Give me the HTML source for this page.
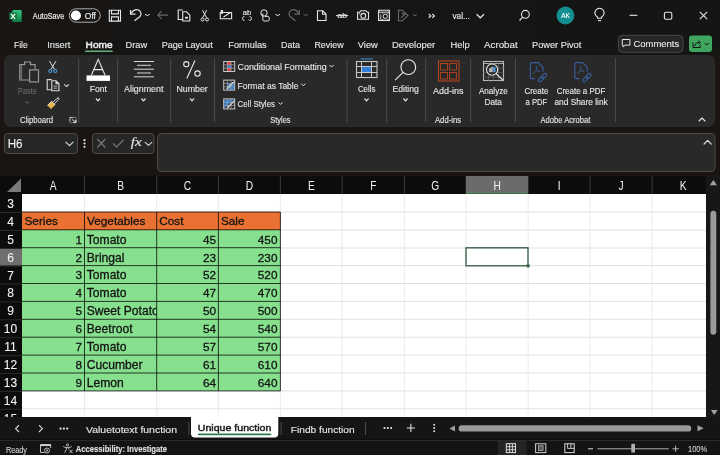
<!DOCTYPE html>
<html><head><meta charset="utf-8"><style>
html,body{margin:0;padding:0;width:720px;height:455px;overflow:hidden;background:#171614;}
svg{display:block;will-change:transform;font-family:"Liberation Sans", sans-serif;}
</style></head><body>
<svg width="720" height="455" viewBox="0 0 720 455">
<defs><linearGradient id="tg" x1="0" x2="1" y1="0" y2="0"><stop offset="0" stop-color="#181513"/><stop offset="0.5" stop-color="#161614"/><stop offset="1" stop-color="#141613"/></linearGradient></defs>
<rect x="0" y="0" width="720" height="55" fill="url(#tg)"/>
<rect x="0" y="55" width="720" height="122" fill="#1a1512"/>
<rect x="4" y="55" width="711" height="72" fill="#292929" rx="7"/>
<defs><linearGradient id="xg" x1="0" x2="0" y1="0" y2="1"><stop offset="0" stop-color="#33c481"/><stop offset="0.5" stop-color="#21a366"/><stop offset="1" stop-color="#107c41"/></linearGradient></defs>
<rect x="12.3" y="10" width="9.4" height="12" fill="url(#xg)" rx="1.2"/>
<rect x="9.3" y="12.6" width="7.6" height="7" fill="#107c41" rx="0.8"/>
<path d="M11,13.9 l4.2,4.9 M15.2,13.9 l-4.2,4.9" stroke="#ffffff" fill="none" stroke-width="1.1"/>
<text x="32.8" y="18.9" font-size="8.3" fill="#e8e8e8" textLength="31.40" lengthAdjust="spacingAndGlyphs" stroke="#e8e8e8" stroke-width="0.2">AutoSave</text>
<rect x="69.25" y="8.8" width="31" height="13.4" fill="none" rx="6.7" stroke="#bdbdbd" stroke-width="0.9"/>
<circle cx="75.9" cy="15.5" r="5.1" fill="#ffffff"/>
<text x="84.8" y="19" font-size="8.3" fill="#e8e8e8" textLength="11.20" lengthAdjust="spacingAndGlyphs" stroke="#e8e8e8" stroke-width="0.2">Off</text>
<path d="M109.3,10.3 h11.2 v10.8 h-11.2 z M111.5,10.3 v3.6 h6.9 v-3.6 M111.5,21.1 v-4.2 h6.9 v4.2" stroke="#e8e8e8" fill="none" stroke-width="1.1"/>
<path d="M130.55,10 V14.1 H135.5" stroke="#e8e8e8" fill="none" stroke-width="1.2"/>
<path d="M131.2,13.4 C133,10.5 136,9 138.5,10 C141.5,11.5 141.5,15 140,16.5 L134.5,20.8" stroke="#e8e8e8" fill="none" stroke-width="1.2"/>
<path d="M145,14.3 L147.4,15.6 L149.7,14.3" stroke="#e8e8e8" fill="none" stroke-width="1"/>
<path d="M158,15.1 h10 M161.7,11.1 l-3.9,4 l3.9,3.8" stroke="#6a6a6a" fill="none" stroke-width="1.1"/>
<path d="M182.7,19.5 h-4.5 v-9.5 h4.5" stroke="#e8e8e8" fill="none" stroke-width="1.1"/>
<path d="M182.7,11.8 h3.8 l3.3,3.3 v5.9 h-7.1 z" stroke="#e8e8e8" fill="none" stroke-width="1.1"/>
<rect x="185" y="16.8" width="3" height="1.8" fill="#e8e8e8"/>
<path d="M202.5,10.2 L206.6,17.8 M206.7,10.2 L202.6,17.8" stroke="#e8e8e8" fill="none" stroke-width="1"/>
<circle cx="202.5" cy="19.5" r="1.5" fill="none" stroke="#e8e8e8" stroke-width="1"/>
<circle cx="207" cy="19.5" r="1.5" fill="none" stroke="#e8e8e8" stroke-width="1"/>
<path d="M220.3,12.5 h11.3 v6.2 h-11.3 z M223.5,17 L230.8,12.3" stroke="#e8e8e8" fill="none" stroke-width="1.1"/>
<rect x="220.8" y="10" width="2.2" height="3.8" fill="#e8e8e8"/>
<text x="247" y="15.3" font-size="6.8" fill="#e8e8e8" textLength="8.50" lengthAdjust="spacingAndGlyphs" text-anchor="middle" stroke="#e8e8e8" stroke-width="0.12">ab</text>
<path d="M244.5,16.5 a2,2 0 0 0 0,4 M249.5,16.5 a2,2 0 0 1 0,4 l-1,-1" stroke="#e8e8e8" fill="none" stroke-width="0.9"/>
<circle cx="264" cy="13" r="3.2" fill="none" stroke="#e8e8e8" stroke-width="1"/>
<path d="M262.8,13.5 v6 a1.5,1.5 0 0 0 1.5,1.5 h3.2 a1.8,1.8 0 0 0 1.8,-1.8 v-1 a1.8,1.8 0 0 0 -1.8,-1.8 h-2.5" stroke="#e8e8e8" fill="none" stroke-width="1"/>
<path d="M275.5,14.3 L277.7,15.6 L279.9,14.3" stroke="#e8e8e8" fill="none" stroke-width="1"/>
<path d="M299.3,10 V14.1 H294.4" stroke="#6a6a6a" fill="none" stroke-width="1.2"/>
<path d="M298.7,13.4 C297,10.5 294,9 291.5,10 C288.5,11.5 288.5,15 290,16.5 L295.5,20.8" stroke="#6a6a6a" fill="none" stroke-width="1.2"/>
<path d="M303.6,14.3 L305.7,15.6 L307.8,14.3" stroke="#6a6a6a" fill="none" stroke-width="1"/>
<path d="M317.5,10.8 h5.2 l3.3,3.3 v6.4 h-8.5 z M322.5,10.8 v3.5 h3.5" stroke="#e8e8e8" fill="none" stroke-width="1.1"/>
<text x="342.2" y="18.2" font-size="6.8" fill="#e8e8e8" textLength="9.50" lengthAdjust="spacingAndGlyphs" text-anchor="middle" stroke="#e8e8e8" stroke-width="0.12">ab</text>
<line x1="336" y1="15.6" x2="348.2" y2="15.6" stroke="#e8e8e8" stroke-width="1"/>
<path d="M357.6,12.3 h2 l1.3,-1.6 h5 l1.3,1.6 h1.3 v7 h-10.9 z" stroke="#e8e8e8" fill="none" stroke-width="1.1"/>
<circle cx="363.3" cy="15.8" r="2.4" fill="none" stroke="#e8e8e8" stroke-width="1.1"/>
<circle cx="359.6" cy="13.8" r="0.6" fill="#e8e8e8"/>
<path d="M378.6,10.2 h10.8 v10.2 h-10.8 z" stroke="#e8e8e8" fill="none" stroke-width="1.1"/>
<line x1="378.6" y1="12.2" x2="389.4" y2="12.2" stroke="#e8e8e8" stroke-width="1"/>
<line x1="380.8" y1="14.5" x2="380.8" y2="19.5" stroke="#e8e8e8" stroke-width="0.8"/>
<circle cx="385.3" cy="16.3" r="2.2" fill="#171614" stroke="#e8e8e8" stroke-width="1"/>
<path d="M383,19 l-1.5,2 M387.6,19 l1.5,2 M383,13.8 l-1,-1 M387.6,13.8 l1,-1" stroke="#e8e8e8" fill="none" stroke-width="0.9"/>
<path d="M398.5,10.2 h4 l5.3,5.3 l-5.3,5.3 h-4 z M401,18 l4.5,-4.5 M402,12.5 l2,2" stroke="#6a6a6a" fill="none" stroke-width="1.1"/>
<path d="M413,14.5 L414.9,15.8 L416.8,14.5" stroke="#6a6a6a" fill="none" stroke-width="1"/>
<path d="M428.8,14 l2,1.9 l-2,1.9 M432.3,14 l2,1.9 l-2,1.9" stroke="#e8e8e8" fill="none" stroke-width="1.2"/>
<text x="452.4" y="19" font-size="8.2" fill="#e8e8e8" textLength="17.50" lengthAdjust="spacingAndGlyphs" stroke="#e8e8e8" stroke-width="0.12">val...</text>
<path d="M476.6,14.2 L480.3,17.8 L484,14.2" stroke="#e8e8e8" fill="none" stroke-width="1.2"/>
<circle cx="525.4" cy="14.3" r="3.9" fill="none" stroke="#e8e8e8" stroke-width="1.1"/>
<path d="M522.6,17.1 L519.5,20.6" stroke="#e8e8e8" fill="none" stroke-width="1.2"/>
<circle cx="565.45" cy="15.5" r="8.9" fill="#138e91"/>
<text x="561.2" y="18.3" font-size="7.4" fill="#ffffff" textLength="8.80" lengthAdjust="spacingAndGlyphs" stroke="#ffffff" stroke-width="0.12">AK</text>
<path d="M597.5,18.3 v-1.3 a4.6,4.6 0 1 1 4,0 v1.3 z" stroke="#e8e8e8" fill="none" stroke-width="1.1"/>
<line x1="598" y1="20.6" x2="601" y2="20.6" stroke="#e8e8e8" stroke-width="1.1"/>
<line x1="629.6" y1="15.3" x2="637.4" y2="15.3" stroke="#e8e8e8" stroke-width="1.1"/>
<rect x="664.4" y="12.2" width="7.4" height="7" fill="none" rx="1.5" stroke="#e8e8e8" stroke-width="1.1"/>
<path d="M699.8,11.9 l7.4,7.2 M707.2,11.9 l-7.4,7.2" stroke="#e8e8e8" fill="none" stroke-width="1.1"/>
<text x="13.9" y="47.7" font-size="9.5" fill="#e8e8e8" textLength="13.90" lengthAdjust="spacingAndGlyphs" stroke="#e8e8e8" stroke-width="0.12">File</text>
<text x="47.2" y="47.7" font-size="9.5" fill="#e8e8e8" textLength="23.10" lengthAdjust="spacingAndGlyphs" stroke="#e8e8e8" stroke-width="0.12">Insert</text>
<text x="85.6" y="47.7" font-size="9.5" fill="#e8e8e8" textLength="26.90" lengthAdjust="spacingAndGlyphs" stroke="#e8e8e8" stroke-width="0.55">Home</text>
<text x="125.6" y="47.7" font-size="9.5" fill="#e8e8e8" textLength="21.60" lengthAdjust="spacingAndGlyphs" stroke="#e8e8e8" stroke-width="0.12">Draw</text>
<text x="161.7" y="47.7" font-size="9.5" fill="#e8e8e8" textLength="51.00" lengthAdjust="spacingAndGlyphs" stroke="#e8e8e8" stroke-width="0.12">Page Layout</text>
<text x="228.3" y="47.7" font-size="9.5" fill="#e8e8e8" textLength="38.40" lengthAdjust="spacingAndGlyphs" stroke="#e8e8e8" stroke-width="0.12">Formulas</text>
<text x="281" y="47.7" font-size="9.5" fill="#e8e8e8" textLength="19.00" lengthAdjust="spacingAndGlyphs" stroke="#e8e8e8" stroke-width="0.12">Data</text>
<text x="314.4" y="47.7" font-size="9.5" fill="#e8e8e8" textLength="29.20" lengthAdjust="spacingAndGlyphs" stroke="#e8e8e8" stroke-width="0.12">Review</text>
<text x="357.8" y="47.7" font-size="9.5" fill="#e8e8e8" textLength="20.00" lengthAdjust="spacingAndGlyphs" stroke="#e8e8e8" stroke-width="0.12">View</text>
<text x="392" y="47.7" font-size="9.5" fill="#e8e8e8" textLength="43.20" lengthAdjust="spacingAndGlyphs" stroke="#e8e8e8" stroke-width="0.12">Developer</text>
<text x="450.5" y="47.7" font-size="9.5" fill="#e8e8e8" textLength="19.20" lengthAdjust="spacingAndGlyphs" stroke="#e8e8e8" stroke-width="0.12">Help</text>
<text x="484" y="47.7" font-size="9.5" fill="#e8e8e8" textLength="33.70" lengthAdjust="spacingAndGlyphs" stroke="#e8e8e8" stroke-width="0.12">Acrobat</text>
<text x="532" y="47.7" font-size="9.5" fill="#e8e8e8" textLength="49.30" lengthAdjust="spacingAndGlyphs" stroke="#e8e8e8" stroke-width="0.12">Power Pivot</text>
<rect x="85" y="50.6" width="27.8" height="1.5" fill="#62b47f" rx="0.7"/>
<rect x="618.5" y="35.3" width="64.5" height="17" fill="#262626" rx="4" stroke="#474747" stroke-width="1"/>
<path d="M622.3,39.5 h7.6 v5.6 h-4.8 l-2,1.9 v-1.9 h-0.8 z" stroke="#e8e8e8" fill="none" stroke-width="1"/>
<text x="633.5" y="47.4" font-size="9.5" fill="#e8e8e8" textLength="45.70" lengthAdjust="spacingAndGlyphs" stroke="#e8e8e8" stroke-width="0.12">Comments</text>
<rect x="689" y="35.5" width="23" height="16.5" fill="#40a55f" rx="3"/>
<path d="M693,42.5 v5 h7.2 v-2.5 M694.8,46 c0.3,-2.5 2,-3.6 4.5,-3.6 M698.3,40.6 l2.2,1.9 l-2.2,1.9" stroke="#111" fill="none" stroke-width="1"/>
<path d="M704.9,43.2 L706.85,44.9 L708.8,43.2" stroke="#111" fill="none" stroke-width="1"/>
<line x1="78.7" y1="58.5" x2="78.7" y2="122.5" stroke="#4a4a4a" stroke-width="1"/>
<line x1="117.6" y1="58.5" x2="117.6" y2="122.5" stroke="#4a4a4a" stroke-width="1"/>
<line x1="170.7" y1="58.5" x2="170.7" y2="122.5" stroke="#4a4a4a" stroke-width="1"/>
<line x1="214.5" y1="58.5" x2="214.5" y2="122.5" stroke="#4a4a4a" stroke-width="1"/>
<line x1="347" y1="58.5" x2="347" y2="122.5" stroke="#4a4a4a" stroke-width="1"/>
<line x1="386.7" y1="58.5" x2="386.7" y2="122.5" stroke="#4a4a4a" stroke-width="1"/>
<line x1="425.6" y1="58.5" x2="425.6" y2="122.5" stroke="#4a4a4a" stroke-width="1"/>
<line x1="470.7" y1="58.5" x2="470.7" y2="122.5" stroke="#4a4a4a" stroke-width="1"/>
<line x1="515.5" y1="58.5" x2="515.5" y2="122.5" stroke="#4a4a4a" stroke-width="1"/>
<line x1="615.5" y1="58.5" x2="615.5" y2="122.5" stroke="#4a4a4a" stroke-width="1"/>
<path d="M29,80 H19.8 V64.6 h4.8 v-2.6 h5.9 v2.6 h4.6 v4.8" stroke="#979797" fill="none" stroke-width="1.2"/>
<line x1="21.3" y1="65.5" x2="21.3" y2="79" stroke="#979797" stroke-width="0.8"/>
<rect x="29.6" y="69.9" width="8.9" height="12" fill="none" stroke="#979797" stroke-width="1.2"/>
<text x="18" y="93.9" font-size="9.5" fill="#6f6f6f" textLength="19.00" lengthAdjust="spacingAndGlyphs">Paste</text>
<path d="M25.4,101.5 L27.2,103 L29,101.5" stroke="#6f6f6f" fill="none" stroke-width="1"/>
<path d="M49.5,61 L54.6,69.6 M56,61 L50.9,69.6" stroke="#e0e0e0" fill="none" stroke-width="1"/>
<circle cx="50.3" cy="71" r="1.5" fill="none" stroke="#4a9be0" stroke-width="1.1"/>
<circle cx="55.3" cy="71" r="1.5" fill="none" stroke="#4a9be0" stroke-width="1.1"/>
<path d="M51.8,89.8 h-4.6 v-10.2 h4.6" stroke="#d8d8d8" fill="none" stroke-width="1.1"/>
<path d="M51.8,80.8 h4.2 l3,3 v7 h-7.2 z M56,80.8 v3 h3" stroke="#d8d8d8" fill="none" stroke-width="1.1"/>
<line x1="53.6" y1="86.2" x2="57.3" y2="86.2" stroke="#d8d8d8" stroke-width="0.8"/>
<line x1="53.6" y1="88.2" x2="57.3" y2="88.2" stroke="#d8d8d8" stroke-width="0.8"/>
<path d="M64.1,84.4 L66.55,86.5 L69,84.4" stroke="#d8d8d8" fill="none" stroke-width="1.1"/>
<path d="M47.5,105.5 L51.5,101.3 L55.2,105 L51,109 z" stroke="none" fill="#e9b44c" stroke-width="1"/>
<path d="M47.5,105.5 L51.5,101.3 L55.2,105" stroke="#e8e8e8" fill="none" stroke-width="0.9"/>
<path d="M52.5,102.3 L58.3,97.5 M54.2,104 L59,99.2 M58.3,97.5 L59,99.2" stroke="#d8d8d8" fill="none" stroke-width="1"/>
<text x="20" y="122.6" font-size="9.5" fill="#e8e8e8" textLength="33.00" lengthAdjust="spacingAndGlyphs" stroke="#e8e8e8" stroke-width="0.12">Clipboard</text>
<path d="M73.5,117.4 h-3.6 v3.6 M76,120 v2.6 h-2.6 M71.8,119.2 l4,3.2 M75.8,119.8 v2.6 h-2.6" stroke="#e0e0e0" fill="none" stroke-width="0.9"/>
<path d="M73.5,117.4 h2.5 v2.6 M69.9,121 v1.6 h3.5" stroke="#8a8a8a" fill="none" stroke-width="0.7"/>
<path d="M91.4,75.2 L98.2,59.3 L105.1,75.2 M93.6,69.6 h9.2" stroke="#e8e8e8" fill="none" stroke-width="1.1"/>
<rect x="86.5" y="75.4" width="23.5" height="5.5" fill="#ffffff"/>
<text x="89.7" y="91.9" font-size="9.5" fill="#e8e8e8" textLength="17.20" lengthAdjust="spacingAndGlyphs" stroke="#e8e8e8" stroke-width="0.12">Font</text>
<path d="M96.3,98.8 L98,100.8 L99.7,98.8" stroke="#e8e8e8" fill="none" stroke-width="1.25" stroke-linecap="round" stroke-linejoin="round"/>
<line x1="133.8" y1="61.5" x2="154" y2="61.5" stroke="#d8d8d8" stroke-width="1"/>
<line x1="137" y1="65.3" x2="151" y2="65.3" stroke="#d8d8d8" stroke-width="1"/>
<line x1="133.8" y1="69.2" x2="154" y2="69.2" stroke="#d8d8d8" stroke-width="1"/>
<line x1="137" y1="73" x2="151" y2="73" stroke="#d8d8d8" stroke-width="1"/>
<line x1="133.8" y1="76.8" x2="154" y2="76.8" stroke="#d8d8d8" stroke-width="1"/>
<text x="124" y="91.9" font-size="9.5" fill="#e8e8e8" textLength="39.40" lengthAdjust="spacingAndGlyphs" stroke="#e8e8e8" stroke-width="0.12">Alignment</text>
<path d="M141.8,98.8 L143.5,100.8 L145.2,98.8" stroke="#e8e8e8" fill="none" stroke-width="1.25" stroke-linecap="round" stroke-linejoin="round"/>
<circle cx="186.3" cy="64.2" r="2.6" fill="none" stroke="#e8e8e8" stroke-width="1.1"/>
<circle cx="197.5" cy="73.6" r="2.7" fill="none" stroke="#e8e8e8" stroke-width="1.1"/>
<path d="M195,60.6 L186.8,78.5" stroke="#e8e8e8" fill="none" stroke-width="1.1"/>
<text x="176.5" y="91.9" font-size="9.5" fill="#e8e8e8" textLength="31.20" lengthAdjust="spacingAndGlyphs" stroke="#e8e8e8" stroke-width="0.12">Number</text>
<path d="M190.3,98.8 L192,100.8 L193.7,98.8" stroke="#e8e8e8" fill="none" stroke-width="1.25" stroke-linecap="round" stroke-linejoin="round"/>
<rect x="226.89999999999998" y="62" width="4.3" height="3.3" fill="#e0393e"/>
<rect x="226.89999999999998" y="68" width="4.3" height="3" fill="#e0393e"/>
<rect x="226.89999999999998" y="65.3" width="4.3" height="2.7" fill="#3a7bd5"/>
<rect x="223.7" y="61.5" width="11" height="10" fill="none" stroke="#c8c8c8" stroke-width="1"/>
<line x1="223.7" y1="64.83333333333333" x2="234.7" y2="64.83333333333333" stroke="#a8a8a8" stroke-width="0.7"/>
<line x1="227.36666666666665" y1="61.5" x2="227.36666666666665" y2="71.5" stroke="#a8a8a8" stroke-width="0.7"/>
<line x1="223.7" y1="68.16666666666667" x2="234.7" y2="68.16666666666667" stroke="#a8a8a8" stroke-width="0.7"/>
<line x1="231.03333333333333" y1="61.5" x2="231.03333333333333" y2="71.5" stroke="#a8a8a8" stroke-width="0.7"/>
<rect x="227.2" y="83.6" width="7" height="6" fill="#2f7bd0"/>
<path d="M226.7,89.1 l7,-7" stroke="#e8e8e8" fill="none" stroke-width="1.4"/>
<rect x="223.7" y="80.1" width="11" height="10" fill="none" stroke="#c8c8c8" stroke-width="1"/>
<line x1="223.7" y1="83.43333333333332" x2="234.7" y2="83.43333333333332" stroke="#a8a8a8" stroke-width="0.7"/>
<line x1="227.36666666666665" y1="80.1" x2="227.36666666666665" y2="90.1" stroke="#a8a8a8" stroke-width="0.7"/>
<line x1="223.7" y1="86.76666666666667" x2="234.7" y2="86.76666666666667" stroke="#a8a8a8" stroke-width="0.7"/>
<line x1="231.03333333333333" y1="80.1" x2="231.03333333333333" y2="90.1" stroke="#a8a8a8" stroke-width="0.7"/>
<path d="M224.2,99.4 h10 l-10,9 z" stroke="none" fill="#2f7bd0" stroke-width="1"/>
<path d="M227.2,107.9 l7,-7" stroke="#e8e8e8" fill="none" stroke-width="1.4"/>
<rect x="223.7" y="98.9" width="11" height="10" fill="none" stroke="#c8c8c8" stroke-width="1"/>
<line x1="223.7" y1="102.23333333333333" x2="234.7" y2="102.23333333333333" stroke="#a8a8a8" stroke-width="0.7"/>
<line x1="227.36666666666665" y1="98.9" x2="227.36666666666665" y2="108.9" stroke="#a8a8a8" stroke-width="0.7"/>
<line x1="223.7" y1="105.56666666666668" x2="234.7" y2="105.56666666666668" stroke="#a8a8a8" stroke-width="0.7"/>
<line x1="231.03333333333333" y1="98.9" x2="231.03333333333333" y2="108.9" stroke="#a8a8a8" stroke-width="0.7"/>
<text x="237.6" y="70.3" font-size="9.5" fill="#e8e8e8" textLength="89.10" lengthAdjust="spacingAndGlyphs" stroke="#e8e8e8" stroke-width="0.12">Conditional Formatting</text>
<path d="M329.8,65.3 L331.6,67.10000000000001 L333.40000000000003,65.3" stroke="#e8e8e8" fill="none" stroke-width="1" stroke-linecap="round" stroke-linejoin="round"/>
<text x="237.6" y="88.8" font-size="9.5" fill="#e8e8e8" textLength="60.90" lengthAdjust="spacingAndGlyphs" stroke="#e8e8e8" stroke-width="0.12">Format as Table</text>
<path d="M301.5,83.89999999999999 L303.3,85.7 L305.1,83.89999999999999" stroke="#e8e8e8" fill="none" stroke-width="1" stroke-linecap="round" stroke-linejoin="round"/>
<text x="237.6" y="107.4" font-size="9.5" fill="#e8e8e8" textLength="37.40" lengthAdjust="spacingAndGlyphs" stroke="#e8e8e8" stroke-width="0.12">Cell Styles</text>
<path d="M278.8,102.6 L280.6,104.4 L282.40000000000003,102.6" stroke="#e8e8e8" fill="none" stroke-width="1" stroke-linecap="round" stroke-linejoin="round"/>
<text x="270.2" y="122.6" font-size="9.5" fill="#e8e8e8" textLength="20.40" lengthAdjust="spacingAndGlyphs" stroke="#e8e8e8" stroke-width="0.12">Styles</text>
<rect x="361.5" y="66.5" width="10" height="6" fill="#2f7fd6"/>
<rect x="356.5" y="61.5" width="20.5" height="16" fill="none" stroke="#c8c8c8" stroke-width="1.1"/>
<line x1="360.7" y1="58.9" x2="372.8" y2="58.9" stroke="#3572b8" stroke-width="1.4"/>
<line x1="356.5" y1="66.5" x2="377" y2="66.5" stroke="#c8c8c8" stroke-width="1"/>
<line x1="356.5" y1="72.5" x2="377" y2="72.5" stroke="#c8c8c8" stroke-width="1"/>
<line x1="361.5" y1="61.5" x2="361.5" y2="77.5" stroke="#c8c8c8" stroke-width="1"/>
<line x1="371.5" y1="61.5" x2="371.5" y2="77.5" stroke="#c8c8c8" stroke-width="1"/>
<text x="357.9" y="91.9" font-size="9.5" fill="#e8e8e8" textLength="17.50" lengthAdjust="spacingAndGlyphs" stroke="#e8e8e8" stroke-width="0.12">Cells</text>
<path d="M364.8,98.8 L366.5,100.8 L368.2,98.8" stroke="#e8e8e8" fill="none" stroke-width="1.25" stroke-linecap="round" stroke-linejoin="round"/>
<circle cx="408.3" cy="67.1" r="7.4" fill="none" stroke="#e8e8e8" stroke-width="1.1"/>
<path d="M403,72.4 L395.2,80.2" stroke="#e8e8e8" fill="none" stroke-width="1.1"/>
<text x="392.5" y="91.9" font-size="9.5" fill="#e8e8e8" textLength="26.30" lengthAdjust="spacingAndGlyphs" stroke="#e8e8e8" stroke-width="0.12">Editing</text>
<path d="M403.8,98.8 L405.5,100.8 L407.2,98.8" stroke="#e8e8e8" fill="none" stroke-width="1.25" stroke-linecap="round" stroke-linejoin="round"/>
<rect x="438.5" y="61" width="20.5" height="20" fill="none" stroke="#b4461f" stroke-width="1.1"/>
<rect x="440.5" y="63.5" width="7" height="6.5" fill="none" stroke="#b4461f" stroke-width="0.9"/>
<rect x="449.5" y="63.5" width="7" height="6.5" fill="none" stroke="#b4461f" stroke-width="0.9"/>
<rect x="440.5" y="72.5" width="7" height="6.5" fill="none" stroke="#b4461f" stroke-width="0.9"/>
<rect x="449.5" y="72.5" width="7" height="6.5" fill="none" stroke="#b4461f" stroke-width="0.9"/>
<text x="433" y="93.6" font-size="9.5" fill="#e8e8e8" textLength="30.50" lengthAdjust="spacingAndGlyphs" stroke="#e8e8e8" stroke-width="0.12">Add-ins</text>
<text x="435" y="122.6" font-size="9.5" fill="#e8e8e8" textLength="26.00" lengthAdjust="spacingAndGlyphs" stroke="#e8e8e8" stroke-width="0.12">Add-ins</text>
<rect x="483.5" y="61.5" width="20" height="19" fill="none" stroke="#b8b8b8" stroke-width="1.1"/>
<line x1="483.5" y1="63.5" x2="503.5" y2="63.5" stroke="#b8b8b8" stroke-width="0.9"/>
<line x1="483.5" y1="68" x2="503.5" y2="68" stroke="#5a5a5a" stroke-width="0.8"/>
<line x1="483.5" y1="72.5" x2="503.5" y2="72.5" stroke="#5a5a5a" stroke-width="0.8"/>
<line x1="483.5" y1="77" x2="503.5" y2="77" stroke="#5a5a5a" stroke-width="0.8"/>
<line x1="488.5" y1="63.5" x2="488.5" y2="80.5" stroke="#5a5a5a" stroke-width="0.8"/>
<line x1="493.5" y1="63.5" x2="493.5" y2="80.5" stroke="#5a5a5a" stroke-width="0.8"/>
<line x1="498.5" y1="63.5" x2="498.5" y2="80.5" stroke="#5a5a5a" stroke-width="0.8"/>
<circle cx="492.1" cy="69.6" r="5.6" fill="#292929" stroke="#e0e0e0" stroke-width="1.1"/>
<rect x="489.3" y="68.2" width="1.5" height="4" fill="#e0e0e0"/>
<rect x="491.3" y="66.8" width="1.3" height="5.4" fill="#e0e0e0"/>
<rect x="493.2" y="67" width="2.3" height="5.2" fill="#4a9be0"/>
<path d="M496.2,73.7 L502.8,80" stroke="#e0e0e0" fill="none" stroke-width="1.2"/>
<text x="478.9" y="93.8" font-size="9.5" fill="#e8e8e8" textLength="28.90" lengthAdjust="spacingAndGlyphs" stroke="#e8e8e8" stroke-width="0.12">Analyze</text>
<text x="484.4" y="104.9" font-size="9.5" fill="#e8e8e8" textLength="17.60" lengthAdjust="spacingAndGlyphs" stroke="#e8e8e8" stroke-width="0.12">Data</text>
<path d="M535,78.6 h-3.4 a1.2,1.2 0 0 1 -1.2,-1.2 v-13.6 a1.2,1.2 0 0 1 1.2,-1.2 h6.6 l4.7,4.7 v4.5" stroke="#3a5d9e" fill="none" stroke-width="1.1"/>
<path d="M536.4,66.3 v4.2 l-3.4,3.2 M536.4,70.5 l3.8,1.2" stroke="#3a5d9e" fill="none" stroke-width="0.9"/>
<g transform="rotate(-45 542.5 77.6)"><rect x="537.3" y="76.0" width="6" height="3.2" rx="1.6" fill="none" stroke="#3a5d9e" stroke-width="1.1"/><rect x="541.7" y="76.0" width="6" height="3.2" rx="1.6" fill="none" stroke="#3a5d9e" stroke-width="1.1"/></g>
<path d="M579.4,78.6 h-3.4 a1.2,1.2 0 0 1 -1.2,-1.2 v-13.6 a1.2,1.2 0 0 1 1.2,-1.2 h6.6 l4.7,4.7 v4.5" stroke="#3a5d9e" fill="none" stroke-width="1.1"/>
<path d="M580.8,66.3 v4.2 l-3.4,3.2 M580.8,70.5 l3.8,1.2" stroke="#3a5d9e" fill="none" stroke-width="0.9"/>
<g transform="rotate(-45 586.9 77.6)"><rect x="581.6999999999999" y="76.0" width="6" height="3.2" rx="1.6" fill="none" stroke="#3a5d9e" stroke-width="1.1"/><rect x="586.1" y="76.0" width="6" height="3.2" rx="1.6" fill="none" stroke="#3a5d9e" stroke-width="1.1"/></g>
<text x="524.4" y="93.8" font-size="9.5" fill="#e8e8e8" textLength="24.00" lengthAdjust="spacingAndGlyphs" stroke="#e8e8e8" stroke-width="0.12">Create</text>
<text x="525.5" y="104.9" font-size="9.5" fill="#e8e8e8" textLength="21.80" lengthAdjust="spacingAndGlyphs" stroke="#e8e8e8" stroke-width="0.12">a PDF</text>
<text x="556.7" y="93.8" font-size="9.5" fill="#e8e8e8" textLength="48.80" lengthAdjust="spacingAndGlyphs" stroke="#e8e8e8" stroke-width="0.12">Create a PDF</text>
<text x="554.4" y="104.9" font-size="9.5" fill="#e8e8e8" textLength="53.40" lengthAdjust="spacingAndGlyphs" stroke="#e8e8e8" stroke-width="0.12">and Share link</text>
<text x="540.4" y="122.6" font-size="9.5" fill="#e8e8e8" textLength="50.00" lengthAdjust="spacingAndGlyphs" stroke="#e8e8e8" stroke-width="0.12">Adobe Acrobat</text>
<path d="M699.0,121.0 L702,118.0 L705.0,121.0" stroke="#e8e8e8" fill="none" stroke-width="1.1" stroke-linecap="round" stroke-linejoin="round"/>
<rect x="4.5" y="133.5" width="73" height="20" fill="#262626" rx="3" stroke="#4e4b49" stroke-width="1"/>
<text x="7.7" y="148" font-size="12" fill="#f0f0f0" textLength="14.80" lengthAdjust="spacingAndGlyphs" stroke="#f0f0f0" stroke-width="0.12">H6</text>
<path d="M65.9,142.1 L69.5,145.70000000000002 L73.1,142.1" stroke="#d8d8d8" fill="none" stroke-width="1.2" stroke-linecap="round" stroke-linejoin="round"/>
<circle cx="84.5" cy="140.2" r="1.1" fill="#e0e0e0"/>
<circle cx="84.5" cy="143.5" r="1.1" fill="#e0e0e0"/>
<circle cx="84.5" cy="146.8" r="1.1" fill="#e0e0e0"/>
<rect x="92.5" y="133.5" width="61.5" height="20" fill="#262626" rx="3" stroke="#4e4b49" stroke-width="1"/>
<path d="M97.3,139 l8,8.5 M105.3,139 l-8,8.5" stroke="#7a7a7a" fill="none" stroke-width="1.1"/>
<path d="M113,143.5 l3.5,3.5 l7,-7" stroke="#7a7a7a" fill="none" stroke-width="1.1"/>
<text x="130.8" y="146.4" font-size="12.5" font-family="Liberation Serif" font-style="italic" fill="#e8e8e8" stroke="#e8e8e8" stroke-width="0.12" textLength="11" lengthAdjust="spacingAndGlyphs">fx</text>
<path d="M145.2,142.3 L148.5,145.3 L151.8,142.3" stroke="#d8d8d8" fill="none" stroke-width="1.1" stroke-linecap="round" stroke-linejoin="round"/>
<rect x="157.5" y="133.5" width="557.5" height="38" fill="#292929" rx="4" stroke="#4e4b49" stroke-width="1"/>
<path d="M704.1,144.0 L707.6,140.39999999999998 L711.1,144.0" stroke="#d8d8d8" fill="none" stroke-width="1.3" stroke-linecap="round" stroke-linejoin="round"/>
<rect x="0" y="176" width="720" height="18" fill="#0c0c0c"/>
<rect x="706" y="176" width="14" height="241" fill="#171717"/>
<rect x="22" y="194" width="684" height="223" fill="#ffffff"/>
<line x1="22" y1="212" x2="706" y2="212" stroke="#e0e0e0" stroke-width="1"/>
<line x1="22" y1="230" x2="706" y2="230" stroke="#e0e0e0" stroke-width="1"/>
<line x1="22" y1="248" x2="706" y2="248" stroke="#e0e0e0" stroke-width="1"/>
<line x1="22" y1="265.6" x2="706" y2="265.6" stroke="#e0e0e0" stroke-width="1"/>
<line x1="22" y1="283.5" x2="706" y2="283.5" stroke="#e0e0e0" stroke-width="1"/>
<line x1="22" y1="301.4" x2="706" y2="301.4" stroke="#e0e0e0" stroke-width="1"/>
<line x1="22" y1="319.3" x2="706" y2="319.3" stroke="#e0e0e0" stroke-width="1"/>
<line x1="22" y1="337.2" x2="706" y2="337.2" stroke="#e0e0e0" stroke-width="1"/>
<line x1="22" y1="355.1" x2="706" y2="355.1" stroke="#e0e0e0" stroke-width="1"/>
<line x1="22" y1="373" x2="706" y2="373" stroke="#e0e0e0" stroke-width="1"/>
<line x1="22" y1="390.9" x2="706" y2="390.9" stroke="#e0e0e0" stroke-width="1"/>
<line x1="22" y1="408.8" x2="706" y2="408.8" stroke="#e0e0e0" stroke-width="1"/>
<line x1="84.5" y1="194" x2="84.5" y2="417" stroke="#ebebeb" stroke-width="1"/>
<line x1="156.7" y1="194" x2="156.7" y2="417" stroke="#ebebeb" stroke-width="1"/>
<line x1="218.4" y1="194" x2="218.4" y2="417" stroke="#ebebeb" stroke-width="1"/>
<line x1="280.4" y1="194" x2="280.4" y2="417" stroke="#ebebeb" stroke-width="1"/>
<line x1="342.2" y1="194" x2="342.2" y2="417" stroke="#ebebeb" stroke-width="1"/>
<line x1="404.4" y1="194" x2="404.4" y2="417" stroke="#ebebeb" stroke-width="1"/>
<line x1="466" y1="194" x2="466" y2="417" stroke="#ebebeb" stroke-width="1"/>
<line x1="528.2" y1="194" x2="528.2" y2="417" stroke="#ebebeb" stroke-width="1"/>
<line x1="590" y1="194" x2="590" y2="417" stroke="#ebebeb" stroke-width="1"/>
<line x1="652.2" y1="194" x2="652.2" y2="417" stroke="#ebebeb" stroke-width="1"/>
<line x1="84.5" y1="176" x2="84.5" y2="193.5" stroke="#3a3a3a" stroke-width="1"/>
<line x1="156.7" y1="176" x2="156.7" y2="193.5" stroke="#3a3a3a" stroke-width="1"/>
<line x1="218.4" y1="176" x2="218.4" y2="193.5" stroke="#3a3a3a" stroke-width="1"/>
<line x1="280.4" y1="176" x2="280.4" y2="193.5" stroke="#3a3a3a" stroke-width="1"/>
<line x1="342.2" y1="176" x2="342.2" y2="193.5" stroke="#3a3a3a" stroke-width="1"/>
<line x1="404.4" y1="176" x2="404.4" y2="193.5" stroke="#3a3a3a" stroke-width="1"/>
<line x1="466" y1="176" x2="466" y2="193.5" stroke="#3a3a3a" stroke-width="1"/>
<line x1="528.2" y1="176" x2="528.2" y2="193.5" stroke="#3a3a3a" stroke-width="1"/>
<line x1="590" y1="176" x2="590" y2="193.5" stroke="#3a3a3a" stroke-width="1"/>
<line x1="652.2" y1="176" x2="652.2" y2="193.5" stroke="#3a3a3a" stroke-width="1"/>
<rect x="466" y="176" width="62" height="17.5" fill="#6b6b6b"/>
<line x1="466" y1="193" x2="528" y2="193" stroke="#4f8f63" stroke-width="1.2"/>
<path d="M7,192 L21,178.5 L21,192 z" stroke="none" fill="#7a7a7a" stroke-width="1"/>
<text x="53.25" y="190" font-size="12.2" fill="#f2f2f2" text-anchor="middle" stroke="#f2f2f2" stroke-width="0" transform="translate(53.25 0) scale(0.84 1) translate(-53.25 0)">A</text>
<text x="120.6" y="190" font-size="12.2" fill="#f2f2f2" text-anchor="middle" stroke="#f2f2f2" stroke-width="0" transform="translate(120.6 0) scale(0.84 1) translate(-120.6 0)">B</text>
<text x="187.55" y="190" font-size="12.2" fill="#f2f2f2" text-anchor="middle" stroke="#f2f2f2" stroke-width="0" transform="translate(187.55 0) scale(0.84 1) translate(-187.55 0)">C</text>
<text x="249.39999999999998" y="190" font-size="12.2" fill="#f2f2f2" text-anchor="middle" stroke="#f2f2f2" stroke-width="0" transform="translate(249.39999999999998 0) scale(0.84 1) translate(-249.39999999999998 0)">D</text>
<text x="311.29999999999995" y="190" font-size="12.2" fill="#f2f2f2" text-anchor="middle" stroke="#f2f2f2" stroke-width="0" transform="translate(311.29999999999995 0) scale(0.84 1) translate(-311.29999999999995 0)">E</text>
<text x="373.29999999999995" y="190" font-size="12.2" fill="#f2f2f2" text-anchor="middle" stroke="#f2f2f2" stroke-width="0" transform="translate(373.29999999999995 0) scale(0.84 1) translate(-373.29999999999995 0)">F</text>
<text x="435.2" y="190" font-size="12.2" fill="#f2f2f2" text-anchor="middle" stroke="#f2f2f2" stroke-width="0" transform="translate(435.2 0) scale(0.84 1) translate(-435.2 0)">G</text>
<text x="497.1" y="190" font-size="12.2" fill="#f2f2f2" text-anchor="middle" stroke="#f2f2f2" stroke-width="0" transform="translate(497.1 0) scale(0.84 1) translate(-497.1 0)">H</text>
<text x="559.1" y="190" font-size="12.2" fill="#f2f2f2" text-anchor="middle" stroke="#f2f2f2" stroke-width="0" transform="translate(559.1 0) scale(0.84 1) translate(-559.1 0)">I</text>
<text x="621.1" y="190" font-size="12.2" fill="#f2f2f2" text-anchor="middle" stroke="#f2f2f2" stroke-width="0" transform="translate(621.1 0) scale(0.84 1) translate(-621.1 0)">J</text>
<text x="683.2" y="190" font-size="12.2" fill="#f2f2f2" text-anchor="middle" stroke="#f2f2f2" stroke-width="0" transform="translate(683.2 0) scale(0.84 1) translate(-683.2 0)">K</text>
<rect x="0" y="194" width="22" height="223" fill="#0c0c0c"/>
<rect x="0" y="248" width="22" height="17.6" fill="#6e6e6e"/>
<text x="10.5" y="207.9" font-size="12" fill="#f2f2f2" text-anchor="middle" stroke="#f2f2f2" stroke-width="0.1">3</text>
<line x1="0" y1="212.5" x2="22" y2="212.5" stroke="#2a2a2a" stroke-width="1"/>
<text x="10.5" y="225.9" font-size="12" fill="#f2f2f2" text-anchor="middle" stroke="#f2f2f2" stroke-width="0.1">4</text>
<line x1="0" y1="230.5" x2="22" y2="230.5" stroke="#2a2a2a" stroke-width="1"/>
<text x="10.5" y="243.9" font-size="12" fill="#f2f2f2" text-anchor="middle" stroke="#f2f2f2" stroke-width="0.1">5</text>
<line x1="0" y1="248.5" x2="22" y2="248.5" stroke="#2a2a2a" stroke-width="1"/>
<text x="10.5" y="261.9" font-size="12" fill="#f2f2f2" text-anchor="middle" stroke="#f2f2f2" stroke-width="0.1">6</text>
<line x1="0" y1="266.1" x2="22" y2="266.1" stroke="#2a2a2a" stroke-width="1"/>
<text x="10.5" y="279.5" font-size="12" fill="#f2f2f2" text-anchor="middle" stroke="#f2f2f2" stroke-width="0.1">7</text>
<line x1="0" y1="284.0" x2="22" y2="284.0" stroke="#2a2a2a" stroke-width="1"/>
<text x="10.5" y="297.4" font-size="12" fill="#f2f2f2" text-anchor="middle" stroke="#f2f2f2" stroke-width="0.1">8</text>
<line x1="0" y1="301.9" x2="22" y2="301.9" stroke="#2a2a2a" stroke-width="1"/>
<text x="10.5" y="315.29999999999995" font-size="12" fill="#f2f2f2" text-anchor="middle" stroke="#f2f2f2" stroke-width="0.1">9</text>
<line x1="0" y1="319.8" x2="22" y2="319.8" stroke="#2a2a2a" stroke-width="1"/>
<text x="10.5" y="333.2" font-size="12" fill="#f2f2f2" text-anchor="middle" stroke="#f2f2f2" stroke-width="0.1">10</text>
<line x1="0" y1="337.7" x2="22" y2="337.7" stroke="#2a2a2a" stroke-width="1"/>
<text x="10.5" y="351.09999999999997" font-size="12" fill="#f2f2f2" text-anchor="middle" stroke="#f2f2f2" stroke-width="0.1">11</text>
<line x1="0" y1="355.6" x2="22" y2="355.6" stroke="#2a2a2a" stroke-width="1"/>
<text x="10.5" y="369.0" font-size="12" fill="#f2f2f2" text-anchor="middle" stroke="#f2f2f2" stroke-width="0.1">12</text>
<line x1="0" y1="373.5" x2="22" y2="373.5" stroke="#2a2a2a" stroke-width="1"/>
<text x="10.5" y="386.9" font-size="12" fill="#f2f2f2" text-anchor="middle" stroke="#f2f2f2" stroke-width="0.1">13</text>
<line x1="0" y1="391.4" x2="22" y2="391.4" stroke="#2a2a2a" stroke-width="1"/>
<text x="10.5" y="404.79999999999995" font-size="12" fill="#f2f2f2" text-anchor="middle" stroke="#f2f2f2" stroke-width="0.1">14</text>
<line x1="0" y1="409.3" x2="22" y2="409.3" stroke="#2a2a2a" stroke-width="1"/>
<text x="10.5" y="422.7" font-size="12" fill="#f2f2f2" text-anchor="middle" stroke="#f2f2f2" stroke-width="0.1">15</text>
<rect x="22" y="212" width="258.4" height="18" fill="#e97132"/>
<rect x="22" y="230" width="258.4" height="160.9" fill="#86e08d"/>
<line x1="22" y1="212" x2="280.4" y2="212" stroke="rgba(0,0,0,0.75)" stroke-width="1"/>
<line x1="22" y1="229.8" x2="280.4" y2="229.8" stroke="rgba(0,0,0,0.75)" stroke-width="1"/>
<line x1="22" y1="247.7" x2="280.4" y2="247.7" stroke="rgba(0,0,0,0.75)" stroke-width="1"/>
<line x1="22" y1="265.6" x2="280.4" y2="265.6" stroke="rgba(0,0,0,0.75)" stroke-width="1"/>
<line x1="22" y1="283.5" x2="280.4" y2="283.5" stroke="rgba(0,0,0,0.75)" stroke-width="1"/>
<line x1="22" y1="301.4" x2="280.4" y2="301.4" stroke="rgba(0,0,0,0.75)" stroke-width="1"/>
<line x1="22" y1="319.3" x2="280.4" y2="319.3" stroke="rgba(0,0,0,0.75)" stroke-width="1"/>
<line x1="22" y1="337.2" x2="280.4" y2="337.2" stroke="rgba(0,0,0,0.75)" stroke-width="1"/>
<line x1="22" y1="355.1" x2="280.4" y2="355.1" stroke="rgba(0,0,0,0.75)" stroke-width="1"/>
<line x1="22" y1="373" x2="280.4" y2="373" stroke="rgba(0,0,0,0.75)" stroke-width="1"/>
<line x1="22" y1="390.9" x2="280.4" y2="390.9" stroke="rgba(0,0,0,0.75)" stroke-width="1"/>
<line x1="84.5" y1="212" x2="84.5" y2="390.9" stroke="rgba(0,0,0,0.75)" stroke-width="1"/>
<line x1="156.7" y1="212" x2="156.7" y2="390.9" stroke="rgba(0,0,0,0.75)" stroke-width="1"/>
<line x1="218.4" y1="212" x2="218.4" y2="390.9" stroke="rgba(0,0,0,0.75)" stroke-width="1"/>
<line x1="280.4" y1="212" x2="280.4" y2="390.9" stroke="rgba(0,0,0,0.75)" stroke-width="1"/>
<text x="24.5" y="225.2" font-size="11.8" fill="#141414" stroke="#141414" stroke-width="0.3">Series</text>
<text x="87.0" y="225.2" font-size="11.8" fill="#141414" stroke="#141414" stroke-width="0.3">Vegetables</text>
<text x="159.2" y="225.2" font-size="11.8" fill="#141414" stroke="#141414" stroke-width="0.3">Cost</text>
<text x="220.9" y="225.2" font-size="11.8" fill="#141414" stroke="#141414" stroke-width="0.3">Sale</text>
<clipPath id="clipB"><rect x="84.5" y="0" width="72" height="455"/></clipPath>
<text x="82" y="243.5" font-size="11.8" fill="#141414" text-anchor="end" stroke="#141414" stroke-width="0.3">1</text>
<text x="86.8" y="243.5" font-size="12.1" fill="#141414" stroke="#141414" stroke-width="0.3" clip-path="url(#clipB)">Tomato</text>
<text x="216" y="243.5" font-size="11.8" fill="#141414" text-anchor="end" stroke="#141414" stroke-width="0.3">45</text>
<text x="277.5" y="243.5" font-size="11.8" fill="#141414" text-anchor="end" stroke="#141414" stroke-width="0.3">450</text>
<text x="82" y="261.5" font-size="11.8" fill="#141414" text-anchor="end" stroke="#141414" stroke-width="0.3">2</text>
<text x="86.8" y="261.5" font-size="12.1" fill="#141414" stroke="#141414" stroke-width="0.3" clip-path="url(#clipB)">Bringal</text>
<text x="216" y="261.5" font-size="11.8" fill="#141414" text-anchor="end" stroke="#141414" stroke-width="0.3">23</text>
<text x="277.5" y="261.5" font-size="11.8" fill="#141414" text-anchor="end" stroke="#141414" stroke-width="0.3">230</text>
<text x="82" y="279.1" font-size="11.8" fill="#141414" text-anchor="end" stroke="#141414" stroke-width="0.3">3</text>
<text x="86.8" y="279.1" font-size="12.1" fill="#141414" stroke="#141414" stroke-width="0.3" clip-path="url(#clipB)">Tomato</text>
<text x="216" y="279.1" font-size="11.8" fill="#141414" text-anchor="end" stroke="#141414" stroke-width="0.3">52</text>
<text x="277.5" y="279.1" font-size="11.8" fill="#141414" text-anchor="end" stroke="#141414" stroke-width="0.3">520</text>
<text x="82" y="297.0" font-size="11.8" fill="#141414" text-anchor="end" stroke="#141414" stroke-width="0.3">4</text>
<text x="86.8" y="297.0" font-size="12.1" fill="#141414" stroke="#141414" stroke-width="0.3" clip-path="url(#clipB)">Tomato</text>
<text x="216" y="297.0" font-size="11.8" fill="#141414" text-anchor="end" stroke="#141414" stroke-width="0.3">47</text>
<text x="277.5" y="297.0" font-size="11.8" fill="#141414" text-anchor="end" stroke="#141414" stroke-width="0.3">470</text>
<text x="82" y="314.9" font-size="11.8" fill="#141414" text-anchor="end" stroke="#141414" stroke-width="0.3">5</text>
<text x="86.8" y="314.9" font-size="12.1" fill="#141414" stroke="#141414" stroke-width="0.3" clip-path="url(#clipB)">Sweet Potato</text>
<text x="216" y="314.9" font-size="11.8" fill="#141414" text-anchor="end" stroke="#141414" stroke-width="0.3">50</text>
<text x="277.5" y="314.9" font-size="11.8" fill="#141414" text-anchor="end" stroke="#141414" stroke-width="0.3">500</text>
<text x="82" y="332.8" font-size="11.8" fill="#141414" text-anchor="end" stroke="#141414" stroke-width="0.3">6</text>
<text x="86.8" y="332.8" font-size="12.1" fill="#141414" stroke="#141414" stroke-width="0.3" clip-path="url(#clipB)">Beetroot</text>
<text x="216" y="332.8" font-size="11.8" fill="#141414" text-anchor="end" stroke="#141414" stroke-width="0.3">54</text>
<text x="277.5" y="332.8" font-size="11.8" fill="#141414" text-anchor="end" stroke="#141414" stroke-width="0.3">540</text>
<text x="82" y="350.7" font-size="11.8" fill="#141414" text-anchor="end" stroke="#141414" stroke-width="0.3">7</text>
<text x="86.8" y="350.7" font-size="12.1" fill="#141414" stroke="#141414" stroke-width="0.3" clip-path="url(#clipB)">Tomato</text>
<text x="216" y="350.7" font-size="11.8" fill="#141414" text-anchor="end" stroke="#141414" stroke-width="0.3">57</text>
<text x="277.5" y="350.7" font-size="11.8" fill="#141414" text-anchor="end" stroke="#141414" stroke-width="0.3">570</text>
<text x="82" y="368.6" font-size="11.8" fill="#141414" text-anchor="end" stroke="#141414" stroke-width="0.3">8</text>
<text x="86.8" y="368.6" font-size="12.1" fill="#141414" stroke="#141414" stroke-width="0.3" clip-path="url(#clipB)">Cucumber</text>
<text x="216" y="368.6" font-size="11.8" fill="#141414" text-anchor="end" stroke="#141414" stroke-width="0.3">61</text>
<text x="277.5" y="368.6" font-size="11.8" fill="#141414" text-anchor="end" stroke="#141414" stroke-width="0.3">610</text>
<text x="82" y="386.5" font-size="11.8" fill="#141414" text-anchor="end" stroke="#141414" stroke-width="0.3">9</text>
<text x="86.8" y="386.5" font-size="12.1" fill="#141414" stroke="#141414" stroke-width="0.3" clip-path="url(#clipB)">Lemon</text>
<text x="216" y="386.5" font-size="11.8" fill="#141414" text-anchor="end" stroke="#141414" stroke-width="0.3">64</text>
<text x="277.5" y="386.5" font-size="11.8" fill="#141414" text-anchor="end" stroke="#141414" stroke-width="0.3">640</text>
<rect x="466" y="247.8" width="62" height="18" fill="none" stroke="#2f5a40" stroke-width="1.3"/>
<rect x="526.6" y="264.4" width="3" height="3" fill="#345f45"/>
<path d="M709.8,185.2 L713.4,180 L717,185.2 z" stroke="none" fill="#a0a0a0" stroke-width="1"/>
<rect x="710.4" y="210.8" width="5.9" height="124" fill="#9a9a9a" rx="2.95"/>
<path d="M710.8,410 L714.2,415 L717.6,410 z" stroke="none" fill="#a0a0a0" stroke-width="1"/>
<rect x="0" y="417" width="720" height="22" fill="#151516"/>
<rect x="0" y="439" width="720" height="16" fill="#141414"/>
<line x1="0" y1="439.5" x2="720" y2="439.5" stroke="#0d0d0d" stroke-width="1"/>
<line x1="0" y1="440.5" x2="720" y2="440.5" stroke="#2a2a2a" stroke-width="1"/>
<path d="M191,417 h87.3 v16.5 a4,4 0 0 1 -4,4 h-79.3 a4,4 0 0 1 -4,-4 z" stroke="none" fill="#ffffff" stroke-width="1"/>
<path d="M19,425.2 l-3.4,3.4 l3.4,3.4" stroke="#d8d8d8" fill="none" stroke-width="1.15"/>
<path d="M39,425.2 l3.4,3.4 l-3.4,3.4" stroke="#d8d8d8" fill="none" stroke-width="1.15"/>
<circle cx="60.6" cy="428.6" r="1.1" fill="#e8e8e8"/>
<circle cx="63.9" cy="428.6" r="1.1" fill="#e8e8e8"/>
<circle cx="67.2" cy="428.6" r="1.1" fill="#e8e8e8"/>
<text x="86" y="433.3" font-size="9.5" fill="#e8e8e8" textLength="91.00" lengthAdjust="spacingAndGlyphs" stroke="#e8e8e8" stroke-width="0.12">Valuetotext function</text>
<line x1="188.9" y1="422" x2="188.9" y2="435" stroke="#4a4a4a" stroke-width="1"/>
<text x="197.8" y="430.8" font-size="9.8" fill="#1a1a1a" textLength="73.60" lengthAdjust="spacingAndGlyphs" stroke="#1a1a1a" stroke-width="0.45">Unique function</text>
<rect x="197.8" y="433.6" width="73.6" height="1.6" fill="#2e7d4f" rx="0.8"/>
<line x1="281.1" y1="422" x2="281.1" y2="435" stroke="#4a4a4a" stroke-width="1"/>
<text x="290.8" y="433.3" font-size="9.5" fill="#e8e8e8" textLength="63.90" lengthAdjust="spacingAndGlyphs" stroke="#e8e8e8" stroke-width="0.12">Findb function</text>
<line x1="365.5" y1="422" x2="365.5" y2="435" stroke="#4a4a4a" stroke-width="1"/>
<circle cx="384.5" cy="428" r="1.1" fill="#e8e8e8"/>
<circle cx="387.8" cy="428" r="1.1" fill="#e8e8e8"/>
<circle cx="391.1" cy="428" r="1.1" fill="#e8e8e8"/>
<path d="M406.7,428 h8.3 M410.85,423.8 v8.3" stroke="#e0e0e0" fill="none" stroke-width="1.1"/>
<circle cx="434.2" cy="424.8" r="1" fill="#e0e0e0"/>
<circle cx="434.2" cy="428" r="1" fill="#e0e0e0"/>
<circle cx="434.2" cy="431.2" r="1" fill="#e0e0e0"/>
<path d="M449.4,428.5 L455,425.5 L455,431.5 z" stroke="none" fill="#a0a0a0" stroke-width="1"/>
<rect x="458.6" y="425.2" width="232.6" height="6.4" fill="#9a9a9a" rx="3.2"/>
<path d="M697.5,425.3 L703.7,428.3 L697.5,431.3 z" stroke="none" fill="#a0a0a0" stroke-width="1"/>
<text x="6" y="452.5" font-size="8.5" fill="#d0d0d0" textLength="21.00" lengthAdjust="spacingAndGlyphs" stroke="#d0d0d0" stroke-width="0.12">Ready</text>
<path d="M44.5,452.5 h-4 v-8 h10.2 v3.5" stroke="#d0d0d0" fill="none" stroke-width="0.9"/>
<rect x="40.5" y="444.5" width="10.2" height="1.6" fill="#d0d0d0"/>
<circle cx="47" cy="450.5" r="2.5" fill="#141414" stroke="#d0d0d0" stroke-width="0.9"/>
<circle cx="47" cy="450.5" r="0.9" fill="#d0d0d0"/>
<circle cx="67.5" cy="445" r="1.1" fill="none" stroke="#d0d0d0" stroke-width="0.8"/>
<path d="M63.3,446.3 q1,1.3 3,1.3 h2.4 q2,0 3,-1.3 M66.3,447.6 v2 l-1.6,3 M68.7,447.6 v1.6 M69.5,449.8 l3,3.2 M72.5,449.8 l-3,3.2" stroke="#d0d0d0" fill="none" stroke-width="0.9"/>
<text x="75.8" y="452.3" font-size="8.3" fill="#e0e0e0" font-weight="700" textLength="91.20" lengthAdjust="spacingAndGlyphs" stroke="#e0e0e0" stroke-width="0.12">Accessibility: Investigate</text>
<rect x="497.8" y="441" width="28.8" height="14" fill="#252525"/>
<rect x="506.3" y="443.7" width="9.2" height="8.9" fill="none" stroke="#e0e0e0" stroke-width="1"/>
<line x1="509.4" y1="443.7" x2="509.4" y2="452.6" stroke="#e0e0e0" stroke-width="0.9"/>
<line x1="512.4" y1="443.7" x2="512.4" y2="452.6" stroke="#e0e0e0" stroke-width="0.9"/>
<line x1="506.3" y1="446.7" x2="515.5" y2="446.7" stroke="#e0e0e0" stroke-width="0.9"/>
<line x1="506.3" y1="449.7" x2="515.5" y2="449.7" stroke="#e0e0e0" stroke-width="0.9"/>
<rect x="535.6" y="443.8" width="10.2" height="8.8" fill="none" stroke="#d0d0d0" stroke-width="1"/>
<rect x="538.3" y="445.8" width="4.8" height="4.8" fill="#5a5a5a" stroke="#c0c0c0" stroke-width="0.7"/>
<rect x="564.8" y="443.8" width="9.4" height="8.8" fill="none" stroke="#d8d8d8" stroke-width="1"/>
<path d="M567.6,443.8 v4.6 h6.6 M570.9,443.8 v4.6" stroke="#d8d8d8" fill="none" stroke-width="0.9"/>
<line x1="588" y1="448.8" x2="593" y2="448.8" stroke="#d8d8d8" stroke-width="1"/>
<line x1="597.5" y1="448.8" x2="668.8" y2="448.8" stroke="#c0c0c0" stroke-width="0.9"/>
<rect x="631.3" y="443.8" width="3.7" height="8.7" fill="#b0b0b0"/>
<path d="M672.5,448.8 h6.3 M675.65,445.6 v6.3" stroke="#c8c8c8" fill="none" stroke-width="0.9"/>
<text x="688" y="452.3" font-size="8.5" fill="#d0d0d0" textLength="19.00" lengthAdjust="spacingAndGlyphs" stroke="#d0d0d0" stroke-width="0.12">100%</text>
</svg>
</body></html>
